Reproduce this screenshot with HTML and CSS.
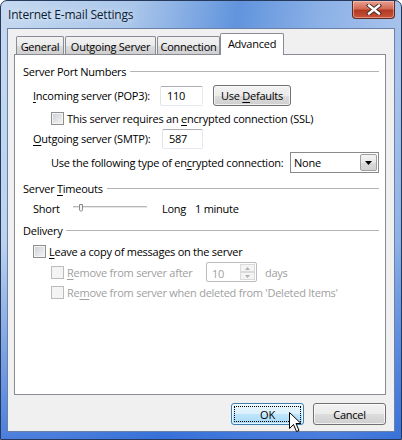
FILE: index.html
```html
<!DOCTYPE html>
<html lang="en">
<head>
  <meta charset="UTF-8">
  <title>Internet E-mail Settings</title>
  <link rel="stylesheet" href="styles.css">
</head>
<body>
  <div class="window">
    <div class="titlebar">
      <span class="title">Internet E-mail Settings</span>
      <div class="close-btn">
        <svg width="16" height="11" viewBox="0 0 16 11">
          <path d="M3 1.5 L13 9.5 M13 1.5 L3 9.5" stroke="#3a2a2a" stroke-width="4.2" stroke-linecap="square"/>
          <path d="M3 1.5 L13 9.5 M13 1.5 L3 9.5" stroke="#fff" stroke-width="2.4" stroke-linecap="square"/>
        </svg>
      </div>
    </div>

    <div class="client">
      <div class="tabs">
        <div class="tab tab-general">General</div>
        <div class="tab tab-outgoing">Outgoing Server</div>
        <div class="tab tab-connection">Connection</div>
        <div class="tab tab-advanced selected">Advanced</div>
      </div>

      <div class="panel">
        <div class="group-title first">
          <span>Server Port Numbers</span>
          <div class="rule"></div>
        </div>

        <div class="row row-incoming">
          <span class="label incoming-label"><u>I</u>ncoming server (POP3):</span>
          <div class="textbox incoming-box">110</div>
          <div class="btn defaults-btn"><span>Use <u>D</u>efaults</span></div>
        </div>

        <div class="row row-check indent">
          <div class="checkbox"></div>
          <span>This server requires an <u>e</u>ncrypted connection (SSL)</span>
        </div>

        <div class="row row-outgoing">
          <span class="label outgoing-label"><u>O</u>utgoing server (SMTP):</span>
          <div class="textbox outgoing-box">587</div>
        </div>

        <div class="row row-enc indent">
          <span class="enc-label">Use the following type of en<u>c</u>rypted connection:</span>
          <div class="select">
            <span>None</span>
            <div class="select-arrow">
              <svg width="7" height="4" viewBox="0 0 7 4"><path d="M0 0 H7 L3.5 4 Z" fill="#000"/></svg>
            </div>
          </div>
        </div>

        <div class="group-title">
          <span>Server <u>T</u>imeouts</span>
          <div class="rule"></div>
        </div>

        <div class="row row-slider">
          <span class="label short-label">Short</span>
          <div class="slider">
            <svg width="74" height="10" viewBox="0 0 74 10">
              <rect x="0" y="3" width="74" height="1" fill="#b8b8b8"/>
              <rect x="0" y="4" width="74" height="1" fill="#e6e6e6"/>
              <path d="M6.5 1.5 V7 L8 8.5 L9.5 7 V1.5 Z" fill="#f4f4f4" stroke="#8a8a8a"/>
            </svg>
          </div>
          <span class="long-label">Long</span>
          <span>1 minute</span>
        </div>

        <div class="group-title">
          <span>Delivery</span>
          <div class="rule"></div>
        </div>

        <div class="row row-check leave">
          <div class="checkbox"></div>
          <span><u>L</u>eave a copy of messages on the server</span>
        </div>

        <div class="row row-after indent disabled">
          <div class="checkbox"></div>
          <span class="after-label"><u>R</u>emove from server after</span>
          <div class="spinner">
            <span>10</span>
            <div class="spin-btns">
              <div class="spin-btn"><svg width="5" height="3" viewBox="0 0 5 3"><path d="M0 3 H5 L2.5 0 Z" fill="#b0b0b0"/></svg></div>
              <div class="spin-btn"><svg width="5" height="3" viewBox="0 0 5 3"><path d="M0 0 H5 L2.5 3 Z" fill="#b0b0b0"/></svg></div>
            </div>
          </div>
          <span class="days">days</span>
        </div>

        <div class="row row-check indent disabled deleted">
          <div class="checkbox"></div>
          <span>Re<u>m</u>ove from server when deleted from 'Deleted Items'</span>
        </div>
      </div>

      <div class="buttons">
        <div class="btn dialog-btn default">
          <div class="focus">OK</div>
          <svg class="cursor" width="13" height="21" viewBox="0 0 13 21">
            <path d="M0.5 0.5 V16.5 L4.5 12.5 L7.5 19.5 L10 18.5 L7 11.5 H12 Z" fill="#fff" stroke="#000" stroke-linejoin="round"/>
          </svg>
        </div>
        <div class="btn dialog-btn">Cancel</div>
      </div>
    </div>
  </div>
</body>
</html>
```

FILE: styles.css
```css
* {
  box-sizing: border-box;
  margin: 0;
  padding: 0;
}

body {
  width: 402px;
  height: 440px;
  font-family: 'Segoe UI', 'Open Sans', sans-serif;
  font-size: 11px;
  letter-spacing: -0.25px;
  color: #000;
  background: #fff;
}

u {
  text-decoration-thickness: 1px;
  text-underline-offset: 2px;
}

/* window frame */

.window {
  width: 402px;
  height: 440px;
  display: flex;
  flex-direction: column;
  padding: 0 6px 7px 6px;
  border: 1px solid #27395a;
  border-radius: 7px 7px 0 0;
  background:
    linear-gradient(to bottom, rgba(255,255,255,0) 55%, rgba(40,100,215,0.75) 100%),
    linear-gradient(100deg, #c5d9f0 0%, #aac6ea 28%, #6194dd 50%, #8db2e7 68%, #a9c4eb 86%, #6a98df 100%);
}

.titlebar {
  height: 27px;
  display: flex;
  justify-content: space-between;
  align-items: flex-start;
}

.title {
  margin: 5px 0 0 1px;
  font-size: 12px;
  letter-spacing: -0.2px;
  color: #0b1b33;
  text-shadow: 0 0 6px rgba(255,255,255,0.9);
}

.close-btn {
  width: 43px;
  height: 18px;
  display: flex;
  justify-content: center;
  align-items: center;
  border: 1px solid #5a2a25;
  border-top: none;
  border-radius: 0 0 4px 4px;
  background: linear-gradient(to bottom, #e8a191 0%, #d46a55 45%, #b33a22 55%, #c9533a 100%);
  box-shadow: inset 0 0 0 1px rgba(255,210,200,0.5);
}

.client {
  flex: 1;
  display: flex;
  flex-direction: column;
  padding: 4px 8px 6px 6px;
  background: #f0f0f0;
  border: 1px solid #6a80a6;
}

/* tabs */

.tabs {
  height: 21px;
  display: flex;
  align-items: flex-end;
  padding-left: 2px;
  position: relative;
  z-index: 1;
}

.tab {
  height: 18px;
  display: flex;
  justify-content: center;
  align-items: center;
  border: 1px solid #898c95;
  border-bottom: none;
  border-radius: 2px 2px 0 0;
  background: linear-gradient(to bottom, #f2f2f2 0%, #ebebeb 50%, #dddddd 51%, #cfcfcf 100%);
  padding-top: 1px;
}

.tab-general { width: 48px; margin-right: 1px; }
.tab-outgoing { width: 91px; margin-right: 1px; }
.tab-connection { width: 63px; }
.tab-advanced { width: 64px; }

.tab.selected {
  height: 22px;
  margin-bottom: -1px;
  background: #fff;
  padding-bottom: 3px;
}

.panel {
  height: 341px;
  padding: 0 6px 0 8px;
  background: #fff;
  border: 1px solid #898c95;
}

.group-title {
  height: 14px;
  display: flex;
  align-items: center;
  gap: 4px;
  margin-top: 8px;
}

.group-title.first {
  margin-top: 9px;
}

.rule {
  flex: 1;
  height: 1px;
  background: #b4b4b4;
}

.row {
  display: flex;
  align-items: center;
}

.indent { padding-left: 28px; }
.leave { padding-left: 10px; margin-top: 7px; }

.label { margin-left: 10px; }

.row-incoming { height: 21px; margin-top: 7px; }
.incoming-label { width: 127px; }

.row-check { height: 14px; gap: 3px; }
.row-incoming + .row-check { margin-top: 5px; }

.row-outgoing { height: 21px; margin-top: 3px; }
.outgoing-label { width: 129px; }

.row-enc { height: 21px; margin-top: 3px; }
.enc-label { width: 239px; }

.row-slider { height: 14px; margin-top: 6px; }
.short-label { width: 40px; }
.slider { width: 74px; height: 10px; margin-top: -4px; }
.long-label { margin-left: 15px; width: 33px; }

.row-after { height: 20px; margin-top: 4px; gap: 3px; }
.after-label { width: 136px; }
.deleted { margin-top: 3px; }

/* controls */

.checkbox {
  width: 13px;
  height: 13px;
  border: 1px solid #8e8f8f;
  background: linear-gradient(135deg, #cbcfd5 0%, #f6f6f6 100%);
  box-shadow: inset 0 0 0 1px #f4f4f4;
}

.textbox {
  height: 20px;
  display: flex;
  align-items: center;
  padding-left: 6px;
  background: #fff;
  border: 1px solid #abadb3;
  border-color: #abadb3 #e3e9ef #e3e9ef #e2e3ea;
  border-radius: 2px;
}

.incoming-box { width: 43px; }
.outgoing-box { width: 41px; }

.btn {
  height: 21px;
  display: flex;
  justify-content: center;
  align-items: center;
  border: 1px solid #707070;
  border-radius: 3px;
  background: linear-gradient(to bottom, #f2f2f2 0%, #ebebeb 50%, #dddddd 51%, #cfcfcf 100%);
  box-shadow: inset 0 0 0 1px rgba(255,255,255,0.7);
}

.defaults-btn {
  width: 78px;
  margin-left: 10px;
}

.select {
  width: 89px;
  height: 21px;
  display: flex;
  align-items: center;
  justify-content: space-between;
  padding: 0 1px 0 3px;
  background: #fff;
  border: 1px solid #8a8a8a;
}

.select-arrow {
  width: 17px;
  height: 17px;
  display: flex;
  justify-content: center;
  align-items: center;
  border: 1px solid #a0a0a0;
  border-radius: 2px;
  background: linear-gradient(to bottom, #f4f4f4 0%, #e8e8e8 50%, #dadada 51%, #d2d2d2 100%);
}

.disabled { color: #a0a0a0; }

.disabled .checkbox {
  border-color: #bcbcbc;
  background: #f4f4f4;
  box-shadow: none;
}

.spinner {
  width: 51px;
  height: 20px;
  display: flex;
  align-items: center;
  justify-content: space-between;
  padding: 1px 1px 1px 5px;
  border: 1px solid #bcbcbc;
  border-radius: 2px;
}

.spinner span { margin-top: 2px; }

.spin-btns {
  width: 15px;
  height: 16px;
  display: flex;
  flex-direction: column;
}

.spin-btn {
  flex: 1;
  display: flex;
  justify-content: center;
  align-items: center;
  border: 1px solid #dadada;
  background: #f4f4f4;
}

.days { margin-left: 5px; }

/* dialog buttons */

.buttons {
  display: flex;
  justify-content: flex-end;
  gap: 9px;
  margin-top: 8px;
}

.dialog-btn {
  width: 73px;
  height: 22px;
}

.btn.default {
  position: relative;
  padding: 2px;
  border-color: #3c7fb1;
  background: linear-gradient(to bottom, #eaf6fd 0%, #d9f0fc 50%, #bee6fd 51%, #a7d9f5 100%);
}

.focus {
  width: 100%;
  height: 100%;
  display: flex;
  justify-content: center;
  align-items: center;
  border: 1px dotted #000;
}

.cursor {
  position: absolute;
  left: 57px;
  top: 8px;
}
```
